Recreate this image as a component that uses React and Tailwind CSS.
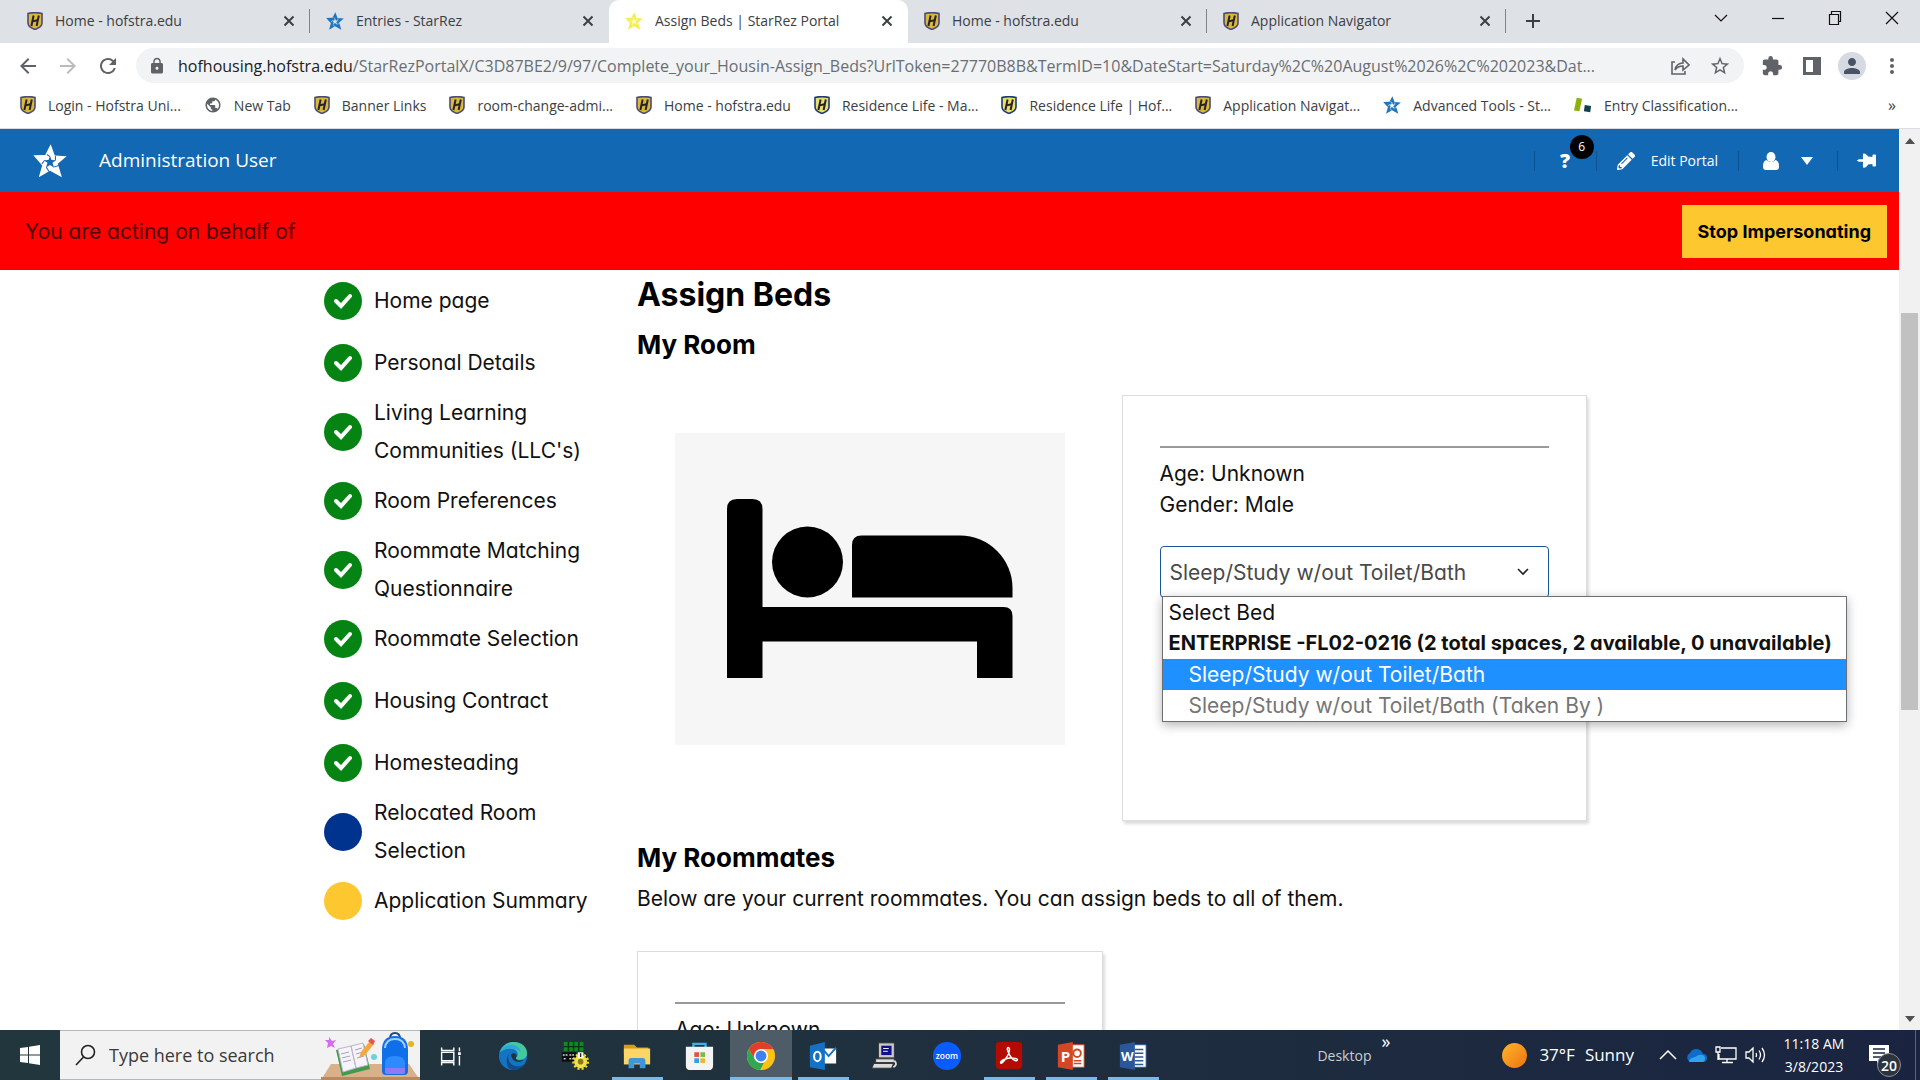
import { useState } from "react";
import { FaPencilAlt, FaThumbtack } from "react-icons/fa";
import {
  MdArrowBack,
  MdArrowForward,
  MdExtension,
  MdLock,
  MdMoreVert,
  MdPerson,
  MdPublic,
  MdRefresh,
  MdStarBorder,
} from "react-icons/md";

const tabs = [
  { title: "Home - hofstra.edu", icon: "shield" },
  { title: "Entries - StarRez", icon: "star" },
  { title: "Assign Beds | StarRez Portal", icon: "yellowStar", active: true },
  { title: "Home - hofstra.edu", icon: "shield" },
  { title: "Application Navigator", icon: "shield" },
];

const bookmarks = [
  { title: "Login - Hofstra Uni...", icon: "shield" },
  { title: "New Tab", icon: "globe" },
  { title: "Banner Links", icon: "shield" },
  { title: "room-change-admi...", icon: "shield" },
  { title: "Home - hofstra.edu", icon: "shield" },
  { title: "Residence Life - Ma...", icon: "shieldLight" },
  { title: "Residence Life | Hof...", icon: "shieldLight" },
  { title: "Application Navigat...", icon: "shield" },
  { title: "Advanced Tools - St...", icon: "star" },
  { title: "Entry Classification...", icon: "blocks" },
];

const steps = [
  { label: "Home page", state: "done" },
  { label: "Personal Details", state: "done" },
  { label: "Living Learning Communities (LLC's)", state: "done" },
  { label: "Room Preferences", state: "done" },
  { label: "Roommate Matching Questionnaire", state: "done" },
  { label: "Roommate Selection", state: "done" },
  { label: "Housing Contract", state: "done" },
  { label: "Homesteading", state: "done" },
  { label: "Relocated Room Selection", state: "current" },
  { label: "Application Summary", state: "todo" },
];

const stepColors = {
  done: "bg-[#058413]",
  current: "bg-[#00338d]",
  todo: "bg-[#fdc82f]",
};

function Shield({ light }) {
  return (
    <svg viewBox="0 0 16 18" className="h-[18px] w-4 shrink-0">
      <path
        d="M1 1.5Q8-.2 15 1.5V11q0 4-7 6.5Q1 15 1 11z"
        fill={light ? "#e9df6a" : "#d9b93b"}
        stroke={light ? "#1c3a78" : "#4d4a78"}
        strokeWidth="1.6"
      />
      <path d="M6.6 3.5 4.4 14M11.8 3.5 9.600 14M5 9.600l6-1.6" stroke="#2a1f2e" strokeWidth="2" fill="none" />
    </svg>
  );
}

// five blades around a small hollow star
function StarLogo({ className, color, gap }) {
  return (
    <svg viewBox="0 0 100 98" className={className}>
      <path
        d="M52 0 64 33 99 35 73 57 85 97 50 78 17 97 27 62 1 32 36 31z"
        fill={color}
      />
      <path
        d="M50 34 54.500 46 68 46.500 57.500 54.500 61.500 68 50 60.500 38.500 68 42.500 54.500 32 46.500 45.500 46z"
        fill={gap}
      />
      <path d="M50 36 41 30M66 47 66 34M60 67 76 62M39 67 47 80M34 47 26 58" stroke={gap} strokeWidth="3" />
    </svg>
  );
}

function SiteIcon({ kind, gap = "#fff" }) {
  if (kind === "shield") return <Shield />;
  if (kind === "shieldLight") return <Shield light />;
  if (kind === "star") return <StarLogo className="size-[18px] shrink-0" color="#1f76bd" gap={gap} />;
  if (kind === "yellowStar") return <StarLogo className="size-[18px] shrink-0" color="#f3ee52" gap="#fffde0" />;
  if (kind === "globe") return <MdPublic className="size-[18px] shrink-0 text-[#5f6368]" />;
  return (
    <svg viewBox="0 0 20 18" className="h-[18px] w-[18px] shrink-0">
      <path d="m3 1 6 1-3 14-6-1z" fill="#8fb008" />
      <path d="m12 9 7 1-1 7-7-1z" fill="#12404d" />
    </svg>
  );
}

function TabStrip() {
  return (
    <div className="flex h-[43px] items-stretch bg-[#dee1e6] pl-[11px] text-[14px] text-[#3c4043]">
      {tabs.map((tab, i) => (
        <div
          key={i}
          className={
            "flex w-[299px] min-w-0 shrink items-center gap-3 pr-3 pb-0.5 pl-4 " +
            (tab.active ? "rounded-t-[10px] bg-white" : "")
          }
        >
          <SiteIcon kind={tab.icon} gap="#dee1e6" />
          <span className="min-w-0 flex-1 truncate">{tab.title}</span>
          <button type="button" aria-label="Close tab">
            <svg viewBox="0 0 16 16" className="size-4">
              <path d="m3.500 3.500 9 9m0-9-9 9" stroke="#3c4043" strokeWidth="2" />
            </svg>
          </button>
          <span
            className={"-mr-3 h-6 w-px " + (tab.active || tabs[i + 1]?.active ? "bg-transparent" : "bg-[#808489]")}
          />
        </div>
      ))}
      <button type="button" aria-label="New tab" className="flex w-[54px] shrink-0 items-center justify-center pb-0.5">
        <svg viewBox="0 0 16 16" className="size-4">
          <path d="M8 1v14M1 8h14" stroke="#3c4043" strokeWidth="2" />
        </svg>
      </button>
      <div className="ml-auto flex h-9 shrink-0">
        <WindowButton label="Search tabs">
          <path d="m2 5 6 6 6-6" />
        </WindowButton>
        <WindowButton label="Minimize">
          <path d="M2 8.500h12" />
        </WindowButton>
        <WindowButton label="Restore">
          <path d="M2.500 4.500h9v10h-9zM4.500 4V1.500h9v10H12" />
        </WindowButton>
        <WindowButton label="Close">
          <path d="m2 2 12 12m0-12L2 14" />
        </WindowButton>
      </div>
    </div>
  );
}

function WindowButton({ label, children }) {
  return (
    <button type="button" aria-label={label} className="flex w-[57px] items-center justify-center">
      <svg viewBox="0 0 16 16" className="size-4" fill="none" stroke="#111" strokeWidth="1.2">
        {children}
      </svg>
    </button>
  );
}

function Toolbar() {
  return (
    <div className="flex h-[45px] items-center pr-2 pl-2 text-[#5f6368]">
      <button type="button" aria-label="Back" className="flex w-10 justify-center">
        <MdArrowBack className="size-6" />
      </button>
      <button type="button" aria-label="Forward" className="flex w-10 justify-center text-[#babcbe]">
        <MdArrowForward className="size-6" />
      </button>
      <button type="button" aria-label="Reload" className="flex w-10 justify-center">
        <MdRefresh className="size-6" />
      </button>
      <div className="ml-2 flex h-[35px] min-w-0 flex-1 items-center rounded-full bg-[#f1f3f4] pr-1 pl-3">
        <MdLock className="size-[18px] shrink-0" />
        <p className="ml-3 min-w-0 flex-1 truncate text-[16px] text-[#6a6e73]">
          <span className="text-[#202124]">hofhousing.hofstra.edu</span>
          /StarRezPortalX/C3D87BE2/9/97/Complete_your_Housin-Assign_Beds?UrlToken=27770B8B&amp;TermID=10&amp;DateStart=Saturday%2C%20August%2026%2C%202023&amp;Dat...
        </p>
        <button type="button" aria-label="Share" className="flex w-10 shrink-0 justify-center">
          <svg viewBox="0 0 20 20" className="size-5" fill="none" stroke="#5f6368" strokeWidth="1.6">
            <path d="M5 6H2v12h13v-3" />
            <path d="M5 14c1-5 4-7 8-7V3l6 6-6 5v-4c-4 0-6 1-8 4z" />
          </svg>
        </button>
        <button type="button" aria-label="Bookmark" className="flex w-10 shrink-0 justify-center">
          <MdStarBorder className="size-[22px]" />
        </button>
      </div>
      <div className="ml-2 flex shrink-0 items-center">
        <button type="button" aria-label="Extensions" className="flex w-10 justify-center">
          <MdExtension className="size-[22px]" />
        </button>
        <button type="button" aria-label="Side panel" className="flex w-10 justify-center">
          <svg viewBox="0 0 18 18" className="size-[18px]">
            <path d="M0 0h18v18H0zM3 3v12h7V3z" fill="#5f6368" fillRule="evenodd" />
          </svg>
        </button>
        <button type="button" aria-label="Profile" className="flex w-10 justify-center">
          <span className="flex size-7 items-center justify-center rounded-full bg-[#d6dae2]">
            <MdPerson className="size-6 text-[#4a5364]" />
          </span>
        </button>
        <button type="button" aria-label="Menu" className="flex w-10 justify-center">
          <MdMoreVert className="size-6" />
        </button>
      </div>
    </div>
  );
}

function BookmarksBar() {
  return (
    <nav className="flex h-[41px] items-center gap-[23px] border-b border-[#dadce0] pr-6 pb-1.5 pl-5 text-[14px] text-[#3c4043]">
      {bookmarks.map((mark, i) => (
        <a key={i} href="#" className="flex shrink-0 items-center gap-3 whitespace-nowrap">
          <SiteIcon kind={mark.icon} />
          {mark.title}
        </a>
      ))}
      <button type="button" aria-label="More bookmarks" className="ml-auto text-[16px]">
        »
      </button>
    </nav>
  );
}

function PortalHeader() {
  return (
    <header className="flex h-[63px] shrink-0 items-center bg-[#1268b3] pl-[33px] text-white">
      <StarLogo className="size-[34px]" color="#fff" gap="#1268b3" />
      <span className="ml-8 text-[19px]">Administration User</span>
      <div className="ml-auto flex items-center">
        <button
          type="button"
          aria-label="Help"
          className="relative flex h-5 w-[63px] items-center justify-center border-x border-[#0e5290] text-[20px] font-extrabold"
        >
          ?
          <span className="absolute -top-4 right-0.5 flex size-6 items-center justify-center rounded-full bg-black text-[12px] font-normal">
            6
          </span>
        </button>
        <button type="button" className="flex h-5 items-center gap-4 border-r border-[#0e5290] px-5 text-[14px]">
          <FaPencilAlt className="size-[18px]" />
          Edit Portal
        </button>
        <button
          type="button"
          aria-label="Account"
          className="flex h-5 w-[99px] items-center justify-center gap-[22px] border-r border-[#0e5290]"
        >
          <svg viewBox="0 0 16 18" className="h-[18px] w-4" fill="#fff">
            <ellipse cx="8" cy="5" rx="4.500" ry="5" />
            <path d="M3.500 8q4.500 4 9 0Q16 9 16 14v1q0 3-3 3H3q-3 0-3-3v-1q0-5 3.500-6z" />
          </svg>
          <svg viewBox="0 0 12 8" className="h-2 w-3" fill="#fff">
            <path d="M0 0h12L6 8z" />
          </svg>
        </button>
        <button type="button" aria-label="Pin" className="flex h-5 w-[61px] items-center justify-center pr-1">
          <FaThumbtack className="size-[19px] rotate-90" />
        </button>
      </div>
    </header>
  );
}

function Steps() {
  return (
    <nav className="w-[313px] shrink-0">
      {steps.map((step) => (
        <a
          key={step.label}
          href="#"
          className="flex min-h-[62px] items-center gap-3 leading-[38px] text-[#111]"
        >
          <span
            className={"flex size-[38px] shrink-0 items-center justify-center rounded-full " + stepColors[step.state]}
          >
            {step.state === "done" && (
              <svg viewBox="0 0 18 16" className="h-4 w-[18px]" fill="none" stroke="#fff" strokeWidth="4">
                <path d="m2 8 5 5 9-10" strokeLinecap="round" />
              </svg>
            )}
          </span>
          <span className="w-[230px]">{step.label}</span>
        </a>
      ))}
    </nav>
  );
}

function PersonCard({ children }) {
  return (
    <div className="h-[426px] border border-[#dcdcdc] px-[37px] pt-[50px] shadow-[2px_3px_3px_rgba(0,0,0,0.14)]">
      <hr className="mb-2.5 border-t-2 border-[#97999b]" />
      <p>Age: Unknown</p>
      <p>Gender: Male</p>
      {children}
    </div>
  );
}

function BedPicture() {
  return (
    <svg viewBox="0 0 390 312" className="mx-auto mt-[38px] block h-[312px] w-[390px] bg-[#f6f6f6]">
      <path d="M52 245V76q0-10 10-10h15.500q10 0 10 10v98h241q9 0 9 9v62H302v-36.500H87.500V245z" />
      <circle cx="132.500" cy="129" r="35.500" />
      <path d="M177 164.500V112q0-9.500 9.500-9.500H285a52.500 52.500 0 0 1 52.500 52.500v9.500z" />
    </svg>
  );
}

function BedSelect() {
  const [bed, setBed] = useState("a");
  return (
    <div className="relative mt-[26px]">
      <select
        aria-label="Select Bed"
        value={bed}
        onChange={(e) => setBed(e.target.value)}
        className="h-[52px] w-full appearance-none rounded border border-[#1b5796] bg-white pr-12 pl-[9px] text-[#494949]"
      >
        <option value="">Select Bed</option>
        <option value="a">Sleep/Study w/out Toilet/Bath</option>
      </select>
      <svg
        viewBox="0 0 12 8"
        className="pointer-events-none absolute top-[22px] right-5 h-2 w-3"
        fill="none"
        stroke="#222"
        strokeWidth="1.6"
      >
        <path d="m1 1 5 5 5-5" />
      </svg>
      <ul className="absolute top-[50px] left-0.5 z-10 w-[685px] border border-[#6b6f73] bg-white whitespace-nowrap shadow-[0_3px_10px_rgba(0,0,0,0.3)]">
        <li className="pl-1.5">Select Bed</li>
        <li className="pl-1.5 text-[20px] font-bold">
          ENTERPRISE -FL02-0216 (2 total spaces, 2 available, 0 unavailable)
        </li>
        <li className="bg-[#1e90ff] pl-[26px] text-white">Sleep/Study w/out Toilet/Bath</li>
        <li className="pl-[26px] text-[#757575]">Sleep/Study w/out Toilet/Bath (Taken By )</li>
      </ul>
    </div>
  );
}

function Portal() {
  return (
    <div className="flex min-w-0 flex-1 flex-col bg-white">
      <PortalHeader />
      <div className="flex flex-1 flex-col font-['Inter',sans-serif] text-[21px] leading-[31px] text-[#111] [font-feature-settings:'cv11']">
        <div className="flex h-[78px] shrink-0 items-center justify-between bg-[#ff0000] pr-3 pl-[25px]">
          <p className="text-[#4c0000]">You are acting on behalf of</p>
          <button type="button" className="h-[53px] bg-[#fdc82f] px-4 text-[18px] font-bold text-black">
            Stop Impersonating
          </button>
        </div>
        <div className="mx-auto flex w-full max-w-[1275px] pl-3">
          <Steps />
          <main className="min-w-0 flex-1">
            <h1 className="pt-1 text-[32px] leading-[42px] font-bold text-black">Assign Beds</h1>
            <h2 className="mt-3 text-[26px] leading-[34px] font-bold text-black">My Room</h2>
            <section className="mt-[33px] grid grid-cols-2 gap-[19px]">
              <BedPicture />
              <PersonCard>
                <BedSelect />
              </PersonCard>
            </section>
            <h2 className="mt-5 text-[26px] leading-[34px] font-bold text-black">My Roommates</h2>
            <p className="mt-2">Below are your current roommates. You can assign beds to all of them.</p>
            <section className="mt-[37px] grid grid-cols-2 gap-[19px]">
              <PersonCard />
            </section>
          </main>
        </div>
      </div>
    </div>
  );
}

function Scrollbar() {
  return (
    <div className="flex w-[21px] shrink-0 flex-col items-center bg-[#f1f1f1]">
      <svg viewBox="0 0 10 6" className="mt-[9px] h-1.5 w-2.5" fill="#505050">
        <path d="M5 0 10 6H0z" />
      </svg>
      <div className="mt-[169px] h-[397px] w-[17px] bg-[#c1c1c1]" />
      <svg viewBox="0 0 10 6" className="mt-auto mb-2 h-1.5 w-2.5" fill="#505050">
        <path d="M0 0h10L5 6z" />
      </svg>
    </div>
  );
}

function SearchArt() {
  return (
    <svg viewBox="0 0 99 50" className="ml-auto h-[50px] w-[99px]">
      <path d="M10 34h78l11 16H0z" fill="#d8b089" />
      <path d="M0 47h99v3H0z" fill="#b98a60" />
      <path d="m8 7 3 4 4-1-3 4 2 4-4-2-4 2 1-5-3-3 4 0z" fill="#d56bf0" />
      <path d="m15 20 28-6 6 25-28 7z" fill="#3f9a4c" />
      <path d="m17 19 13-3 5 22-13 4zM30 16l12-3 5 22-12 3z" fill="#f6f3fb" stroke="#b9b6c9" />
      <path d="m20 24 8-2m-7 6 8-2m-7 6 8-2m4-10 7-2m-6 6 7-2m-6 6 7-2" stroke="#a7a3bd" />
      <path d="m38 28 2-6 9-11 4 3-9 11z" fill="#f6a63a" />
      <path d="m47 11 3-3 4 3-2 4z" fill="#e4574f" />
      <circle cx="53" cy="27" r="3" fill="#6bd0e0" />
      <circle cx="90" cy="14" r="3" fill="#e8b320" />
      <path d="M69 9q0-6 5-6t5 6" stroke="#1a4c8c" strokeWidth="2" fill="none" />
      <path d="M61 20q0-14 13-14t13 14v21q0 4-4 4H65q-4 0-4-4z" fill="#0f6fe8" />
      <path d="M64 18q1-9 10-9t10 9" stroke="#9fd0ff" strokeWidth="2" fill="none" />
      <path d="M64 33q0-7 10-7t10 7v9q0 2-2 2H66q-2 0-2-2z" fill="#2e8bff" />
      <path d="M64 38h20v4q0 2-2 2H66q-2 0-2-2z" fill="#8c7bf2" />
    </svg>
  );
}

const apps = [
  {
    name: "Task View",
    art: (
      <g fill="none" stroke="#fff" strokeWidth="1.5">
        <path d="M6 7v3h13V7M6 26v-3h13v3M6 12h13v9H6zM25 7v4M25 16v10" />
        <path d="M23.500 12h3v3h-3z" fill="#fff" stroke="none" />
      </g>
    ),
  },
  {
    name: "Edge",
    art: (
      <g>
        <circle cx="16" cy="16" r="15" fill="#1474c4" />
        <path d="M2 12C5 3 12 1 17 1c9 0 14 6 14 12 0 5-4 7-8 7-3 0-4-1-4-2 1-1 2-2 2-4 0-3-3-6-8-6-5 0-9 2-11 4z" fill="#43c8a0" />
        <path d="M2 12C5 6 9 4 14 4c6 0 10 4 10 8-2-3-6-4-11-4-5 0-9 2-11 4z" fill="#2ba6df" />
        <path d="M12 13c-3 6 1 14 9 14 3 0 5-1 7-2-3 4-7 6-12 6-7 0-9-12-4-18z" fill="#114a8b" />
        <path d="M14 14c2-2 6-1 6 2 0 1-1 1-1 2 0 2 3 4 8 2-2 4-13 3-13-6z" fill="#21353d" />
      </g>
    ),
  },
  {
    name: "Session",
    art: (
      <g>
        <path d="M4 1h21v10H4z" fill="#0e8a22" />
        <path d="M4 6h21M9 1v10M14.500 1v10M20 1v10" stroke="#031" strokeWidth="1.500" />
        <path d="M2 12h15v10H2z" fill="#0a0c0e" />
        <path d="M3 15h5m2 0h5M4 19h3m3 0h5" stroke="#cfcfcf" strokeWidth="1.500" strokeDasharray="2 1" />
        <circle cx="22" cy="22" r="7" fill="#f1e25a" stroke="#ecd92b" strokeDasharray="2 2" strokeWidth="4" />
        <circle cx="22" cy="22" r="3" fill="#8a7a18" />
        <path d="M19 12h6v6h-6z" fill="#fff" />
        <path d="M22 13v4" stroke="#222" strokeWidth="1.500" />
      </g>
    ),
  },
  {
    name: "File Explorer",
    running: true,
    art: (
      <g>
        <path d="M2 4h11l3 3h12v7H2z" fill="#d99a1a" />
        <path d="M2 8h28v17H2z" fill="#fbd667" />
        <path d="M7 29v-8q0-3 3-3h12q3 0 3 3v8h-6v-5h-6v5z" fill="#3f97d8" />
      </g>
    ),
  },
  {
    name: "Store",
    art: (
      <g>
        <path d="M10 7V3h13v4" fill="none" stroke="#35b4e8" strokeWidth="2.500" />
        <path d="M2 6h29v20q0 5-5 5H7q-5 0-5-5z" fill="#f3f3f3" />
        <path d="M11 12h5v5h-5z" fill="#e5533b" />
        <path d="M17.500 12h5v5h-5z" fill="#7fb93f" />
        <path d="M11 18.500h5v5h-5z" fill="#2f9fe6" />
        <path d="M17.500 18.500h5v5h-5z" fill="#f3b429" />
      </g>
    ),
  },
  {
    name: "Chrome",
    active: true,
    art: (
      <g>
        <circle cx="16" cy="16" r="15" fill="#fbc116" />
        <path d="M3 8.500A15 15 0 0 1 29 8.500H16l-6.500 11z" fill="#e33b2e" />
        <path d="M3 8.500 9.500 19.700 16 23.500h3L15 31A15 15 0 0 1 3 8.500z" fill="#2da94f" />
        <circle cx="16" cy="16" r="7.500" fill="#fff" />
        <circle cx="16" cy="16" r="5.800" fill="#3f82ef" />
      </g>
    ),
  },
  {
    name: "Outlook",
    running: true,
    art: (
      <g>
        <path d="M17 8h13v16H17z" fill="#fff" />
        <path d="m17 10 5 6 8-9" fill="none" stroke="#1372c4" strokeWidth="2" />
        <path d="m2 5 16-4v30L2 28z" fill="#1372c4" />
        <ellipse cx="10" cy="16.500" rx="3.500" ry="5" fill="none" stroke="#fff" strokeWidth="2.200" />
      </g>
    ),
  },
  {
    name: "Terminal",
    art: (
      <g>
        <path d="M9 2h17v16H9z" fill="#c9c9c9" stroke="#333" />
        <path d="M12 5h11v10H12z" fill="#10108c" />
        <path d="M14 8h6m-6 3h5" stroke="#fff" />
        <path d="M6 19h20v4H6zM4 24h21l-2 5H2z" fill="#dcdcdc" stroke="#333" />
        <path d="M26 21q4 4-1 7" stroke="#ddd" strokeWidth="2" fill="none" />
      </g>
    ),
  },
  {
    name: "Zoom",
    art: (
      <g>
        <circle cx="16" cy="16" r="15" fill="#0b5cff" />
        <text x="16" y="19" fontSize="9" fontWeight="600" textAnchor="middle" fill="#fff">
          zoom
        </text>
      </g>
    ),
  },
  {
    name: "Acrobat",
    running: true,
    art: (
      <g>
        <rect x="2" y="1" width="28" height="29" rx="4" fill="#b30b00" />
        <path
          d="M15 7c3 0 1 7-2 11-3 5-6 7-6 5s6-5 10-5 8 0 8 2-4 1-7-3-5-10-3-10z"
          fill="none"
          stroke="#fff"
          strokeWidth="1.600"
        />
      </g>
    ),
  },
  {
    name: "PowerPoint",
    running: true,
    art: (
      <g>
        <path d="M16 4h14v24H16z" fill="#fff" stroke="#d24726" />
        <path d="M19 21h8m-8 3h8" stroke="#d24726" strokeWidth="1.500" />
        <circle cx="22.500" cy="13" r="4" fill="none" stroke="#d24726" strokeWidth="2" />
        <path d="m2 4 16-3v30L2 28z" fill="#d24726" />
        <text x="10" y="22" fontSize="16" fontWeight="700" textAnchor="middle" fill="#fff">
          P
        </text>
      </g>
    ),
  },
  {
    name: "Word",
    running: true,
    art: (
      <g>
        <path d="M16 4h14v24H16z" fill="#fff" stroke="#2b579a" />
        <path d="M18 9h9m-9 4h9m-9 4h9m-9 4h9m-9 4h9" stroke="#2b579a" strokeWidth="1.500" />
        <path d="m2 4 16-3v30L2 28z" fill="#2b579a" />
        <text x="10" y="21" fontSize="14" fontWeight="700" textAnchor="middle" fill="#fff">
          W
        </text>
      </g>
    ),
  },
];

function Taskbar() {
  return (
    <footer className="flex h-[50px] shrink-0 items-stretch bg-linear-to-r from-[#21373d] via-[#1f2f3e] to-[#1a2440] text-white">
      <button type="button" aria-label="Start" className="flex w-[60px] shrink-0 items-center justify-center">
        <svg viewBox="0 0 20 20" className="size-5" fill="#fff">
          <path d="m0 3 8-1v7.500H0zM9 1.800 20 0v9.500H9zM0 10.500h8V18l-8-1zM9 10.500h11V20L9 18.200z" />
        </svg>
      </button>
      <div className="flex w-[360px] shrink-0 items-center border-y border-[#b5b8ba] bg-[#f2f2f2] pl-[15px]">
        <svg viewBox="0 0 22 22" className="size-[22px] shrink-0" fill="none" stroke="#222" strokeWidth="1.600">
          <circle cx="13" cy="8" r="6.500" />
          <path d="m8.500 13-7.500 8" />
        </svg>
        <input
          type="text"
          aria-label="Search"
          placeholder="Type here to search"
          className="ml-3 w-[190px] text-[18px] placeholder:text-[#3a3a3a]"
        />
        <SearchArt />
      </div>
      {apps.map((app) => (
        <button
          key={app.name}
          type="button"
          aria-label={app.name}
          className={
            "flex w-[62px] shrink-0 flex-col items-center justify-end gap-[6px] " + (app.active ? "bg-[#4d5c66]" : "")
          }
        >
          <svg viewBox="0 0 32 32" className="size-[30px]">
            {app.art}
          </svg>
          <span
            className={
              app.active ? "h-[3px] w-full bg-[#76b9ed]" : app.running ? "h-[3px] w-[51px] bg-[#76b9ed]" : "h-[3px]"
            }
          />
        </button>
      ))}
      <div className="ml-auto flex shrink-0 items-center">
        <span className="text-[14px] text-[#c9ced3]">Desktop</span>
        <button type="button" aria-label="More" className="mr-[112px] ml-2.5 self-start pt-px text-[18px] leading-5">
          »
        </button>
        <span className="size-[25px] rounded-full bg-linear-to-br from-[#fbb62c] to-[#ee7110]" />
        <span className="ml-3 flex gap-2.5 text-[17px]">
          <span>37°F</span>
          <span>Sunny</span>
        </span>
        <div className="ml-[25px] flex items-center gap-2">
          <svg viewBox="0 0 18 10" className="h-2.5 w-[18px]" fill="none" stroke="#fff" strokeWidth="1.500">
            <path d="m1 9 8-8 8 8" />
          </svg>
          <svg viewBox="0 0 22 14" className="h-3.5 w-[22px]">
            <path d="M5 14a5 5 0 0 1 0-9 7 7 0 0 1 13 1 4 4 0 0 1 0 8z" fill="#0f6cc8" />
            <path d="M4 14q0-4 6-5 4-3 8-2a4 4 0 0 1 0 7z" fill="#2ea3ee" />
          </svg>
          <svg viewBox="0 0 22 18" className="h-[18px] w-[22px]" fill="none" stroke="#fff" strokeWidth="1.300">
            <path d="M6 2h15v11H4V8M12 13v3M7 16.500h11M1 1h4v5H1zM3 6v8" />
          </svg>
          <svg viewBox="0 0 22 18" className="h-[18px] w-[22px]" fill="none" stroke="#fff" strokeWidth="1.300">
            <path d="M1 6h3l4-4v14l-4-4H1zM11 7q1 2 0 4M14 4.500q3 4.500 0 9M17 2q5 7 0 14" />
          </svg>
        </div>
        <div className="mr-1 ml-4 w-[62px] text-center text-[14px] leading-[23px] whitespace-nowrap">
          <p>11:18 AM</p>
          <p>3/8/2023</p>
        </div>
        <button type="button" aria-label="Notifications" className="relative mr-[26px] ml-5">
          <svg viewBox="0 0 20 20" className="size-5">
            <path d="M0 0h20v16h-8l-4 4v-4H0z" fill="#fff" />
            <path d="M4 4h12M4 8h12M4 12h8" stroke="#1b2740" strokeWidth="1.500" />
          </svg>
          <span className="absolute top-2 left-2 flex size-6 items-center justify-center rounded-full border border-[#8a9099] bg-[#2d3440] text-[14px] font-semibold">
            20
          </span>
        </button>
        <span className="mr-1 h-full w-px bg-[#5c6478]" />
      </div>
    </footer>
  );
}

export default function App() {
  return (
    <div className="flex h-screen flex-col overflow-hidden bg-white font-['Open_Sans','Noto_Sans',sans-serif]">
      <TabStrip />
      <Toolbar />
      <BookmarksBar />
      <div className="flex min-h-0 flex-1 overflow-hidden">
        <Portal />
        <Scrollbar />
      </div>
      <Taskbar />
    </div>
  );
}
